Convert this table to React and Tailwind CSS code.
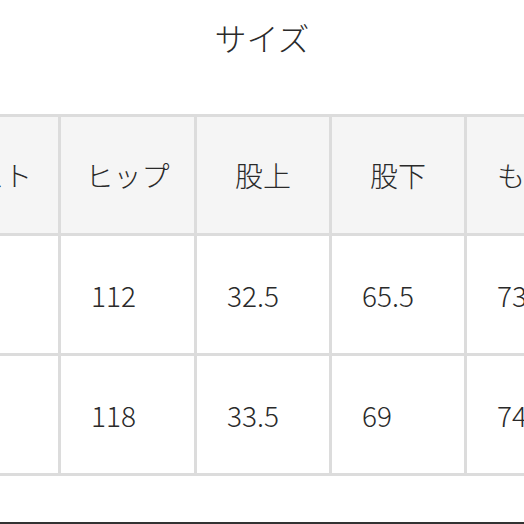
const headers = ["ウエスト", "ヒップ", "股上", "股下", "もも周り"];
const rows = [
  ["M", "112", "32.5", "65.5", "73"],
  ["L", "118", "33.5", "69", "74"],
];

export default function App() {
  return (
    <div
      className="w-[524px] h-[524px] overflow-hidden bg-white flex flex-col text-[#2a2a2a] font-light"
      style={{ fontFamily: '"Noto Sans CJK JP", "Noto Sans", sans-serif' }}
    >
      <div className="h-[114px] pt-[21px] text-center text-[32px] leading-[32px]">
        サイズ
      </div>

      <div className="-ml-[109px] w-[760px] grid grid-cols-[164px_133px_132px_132px_172px] gap-[3px] p-[3px] bg-[#dcdcdc]">
        {headers.map((h) => (
          <div
            key={h}
            className="h-[116px] bg-[#f5f5f5] flex items-center justify-center text-[28px] whitespace-nowrap"
          >
            {h}
          </div>
        ))}
        {rows.map((r) => (
          <div key={r[0]} className="contents">
            {r.map((v, i) => (
              <div
                key={i}
                className="h-[117px] bg-white flex items-center pl-[30px] text-[28px]"
              >
                {i === 0 ? "" : v}
              </div>
            ))}
          </div>
        ))}
      </div>

      <div className="mt-auto h-[2px] bg-[#333]" />
    </div>
  );
}
